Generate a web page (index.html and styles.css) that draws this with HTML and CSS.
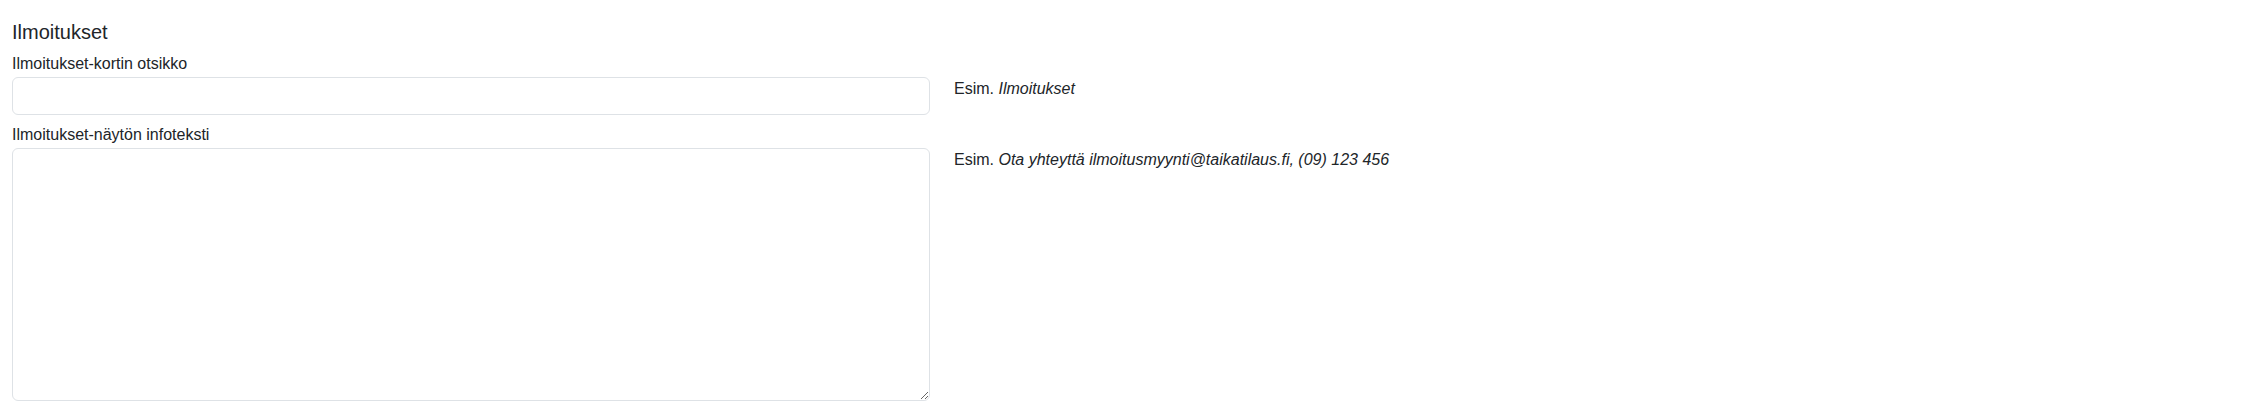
FILE: index.html
```html
<!DOCTYPE html>
<html lang="fi">
<head>
<meta charset="utf-8">
<title>Ilmoitukset</title>
<link rel="stylesheet" href="styles.css">
</head>
<body>
<div class="page">
  <h5 class="section-title">Ilmoitukset</h5>
  <div class="field">
    <label class="field-label" for="card-title">Ilmoitukset-kortin otsikko</label>
    <div class="field-row">
      <input class="form-control" id="card-title" type="text">
      <div class="help">Esim. <em>Ilmoitukset</em></div>
    </div>
  </div>
  <div class="field">
    <label class="field-label" for="info-text">Ilmoitukset-näytön infoteksti</label>
    <div class="field-row">
      <textarea class="form-control textarea" id="info-text"></textarea>
      <div class="help">Esim. <em>Ota yhteyttä ilmoitusmyynti@taikatilaus.fi, (09) 123 456</em></div>
    </div>
  </div>
</div>
</body>
</html>
```

FILE: styles.css
```css
* {
  box-sizing: border-box;
}

html, body {
  margin: 0;
  background: #fff;
}

body {
  font-family: "Liberation Sans", Arial, sans-serif;
  font-size: 16px;
  line-height: 1.5;
  color: #212529;
}

.page {
  padding: 20px 12px 0;
}

.section-title {
  margin: 0 0 8px;
  font-size: 20px;
  font-weight: 400;
  line-height: 1.2;
}

.field {
  margin-bottom: 8px;
}

.field-label {
  display: block;
  margin-bottom: 1px;
}

.field-row {
  display: grid;
  grid-template-columns: 918px 1fr;
  column-gap: 24px;
  align-items: start;
}

.form-control {
  display: block;
  width: 100%;
  height: 38px;
  padding: 6px 12px;
  font: inherit;
  color: #212529;
  background: #fff;
  border: 1px solid #dee2e6;
  border-radius: 6px;
  outline: none;
}

.textarea {
  height: 253px;
  resize: vertical;
}

.help em {
  font-style: italic;
}
```
